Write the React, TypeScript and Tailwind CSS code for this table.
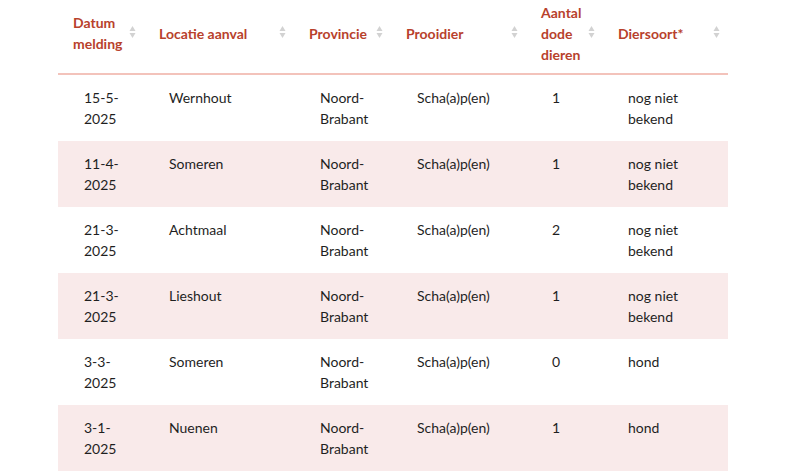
import React from 'react';

type Row = {
  datum: string;
  locatie: string;
  provincie: string;
  prooidier: string;
  aantal: string;
  diersoort: string;
};

const columns = [
  { label: 'Datum melding', width: 'w-[86px]' },
  { label: 'Locatie aanval', width: 'w-[150px]' },
  { label: 'Provincie', width: 'w-[97px]' },
  { label: 'Prooidier', width: 'w-[135px]' },
  { label: 'Aantal dode dieren', width: 'w-[77px]' },
  { label: 'Diersoort*', width: 'w-[125px]' }
];

const rows: Row[] = [
  { datum: '15-5-2025', locatie: 'Wernhout', provincie: 'Noord-Brabant', prooidier: 'Scha(a)p(en)', aantal: '1', diersoort: 'nog niet bekend' },
  { datum: '11-4-2025', locatie: 'Someren', provincie: 'Noord-Brabant', prooidier: 'Scha(a)p(en)', aantal: '1', diersoort: 'nog niet bekend' },
  { datum: '21-3-2025', locatie: 'Achtmaal', provincie: 'Noord-Brabant', prooidier: 'Scha(a)p(en)', aantal: '2', diersoort: 'nog niet bekend' },
  { datum: '21-3-2025', locatie: 'Lieshout', provincie: 'Noord-Brabant', prooidier: 'Scha(a)p(en)', aantal: '1', diersoort: 'nog niet bekend' },
  { datum: '3-3-2025', locatie: 'Someren', provincie: 'Noord-Brabant', prooidier: 'Scha(a)p(en)', aantal: '0', diersoort: 'hond' },
  { datum: '3-1-2025', locatie: 'Nuenen', provincie: 'Noord-Brabant', prooidier: 'Scha(a)p(en)', aantal: '1', diersoort: 'hond' }
];

const SortIcon = () => (
  <svg className="absolute right-[8px] top-[25px]" width="7" height="14" viewBox="0 0 7 14">
    <path d="M3.5 1 L6.5 6 L0.5 6 Z" fill="#d2d2d2" />
    <path d="M0.5 8 L6.5 8 L3.5 13 Z" fill="#d2d2d2" />
  </svg>
);

const splitCell = (value: string) => {
  // dates and provinces wrap after the last hyphen
  const last = value.lastIndexOf('-');
  if (last === -1) return value;
  return (
    <>
      {value.slice(0, last + 1)}
      <br />
      {value.slice(last + 1)}
    </>
  );
};

export default function App() {
  return (
    <div className="w-[800px] h-[472px] overflow-hidden bg-white pl-[58px] font-['Lato',sans-serif]">
      <table className="table-fixed border-collapse w-[670px] text-[14px] leading-[21px]">
        <thead>
          <tr className="h-[74px] border-b-2 border-[#f3c3bb]">
            {columns.map((col) => (
              <th
                key={col.label}
                className={`${col.width} relative pl-[15px] pr-[22px] pb-[7px] text-left align-middle font-bold text-[#b8412c]`}
              >
                {col.label}
                <SortIcon />
              </th>
            ))}
          </tr>
        </thead>
        <tbody>
          {rows.map((row, idx) => (
            <tr key={idx} className={idx % 2 === 1 ? 'bg-[#f9eaea]' : 'bg-white'}>
              <td className="h-[66px] pl-[26px] pr-[10px] py-[12px] align-top text-[#1f1f1f]">{splitCell(row.datum)}</td>
              <td className="pl-[25px] pr-[10px] py-[12px] align-top text-[#1f1f1f]">{row.locatie}</td>
              <td className="pl-[26px] pr-[10px] py-[12px] align-top text-[#1f1f1f]">{splitCell(row.provincie)}</td>
              <td className="pl-[26px] pr-[10px] py-[12px] align-top text-[#1f1f1f]">{row.prooidier}</td>
              <td className="pl-[26px] pr-[10px] py-[12px] align-top text-[#1f1f1f]">{row.aantal}</td>
              <td className="pl-[25px] pr-[10px] py-[12px] align-top text-[#1f1f1f]">
                {row.diersoort === 'hond' ? 'hond' : (<>nog niet<br />bekend</>)}
              </td>
            </tr>
          ))}
        </tbody>
      </table>
    </div>
  );
}
